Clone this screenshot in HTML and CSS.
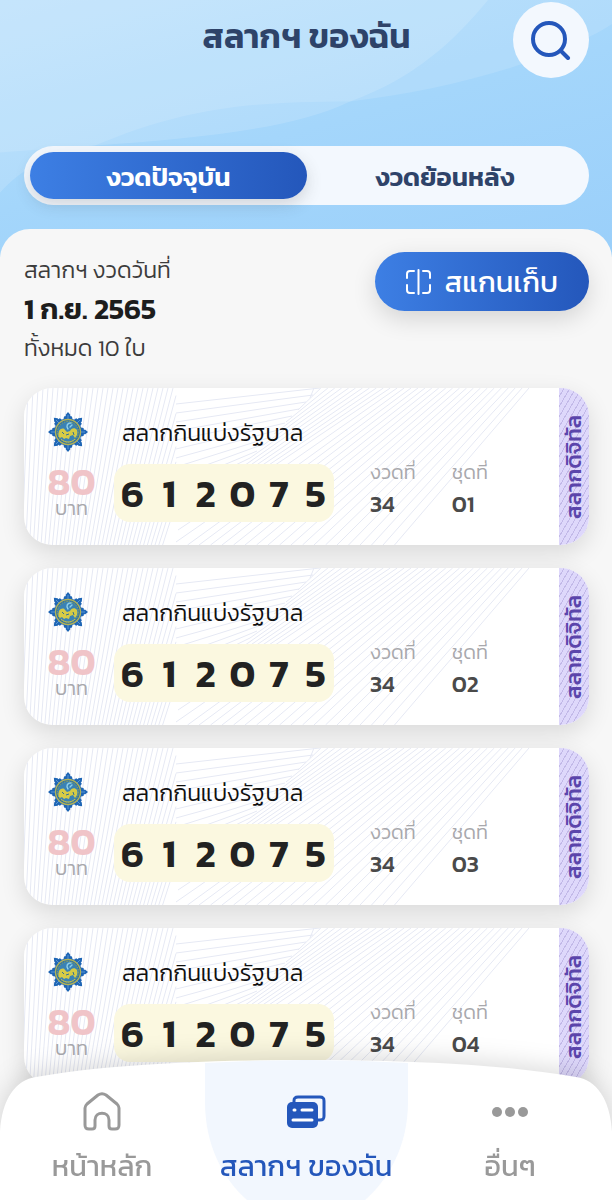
FILE: index.html
```html
<!DOCTYPE html>
<html lang="th">
<head>
<meta charset="utf-8">
<meta name="viewport" content="width=device-width, initial-scale=1">
<title>สลากฯ ของฉัน</title>
<link rel="stylesheet" href="styles.css">
</head>
<body>
<svg class="defs" aria-hidden="true">
  <symbol id="emblem" viewBox="0 0 40 40">
    <g fill="#1f66b5">
      <path id="petal" d="M20 0l2.500 3-.5 1 2 .5 .5 2.500 1.500 1-6 6-6-6 1.500-1 .5-2.500 2-.5-.5-1z"/>
      <use href="#petal" transform="rotate(45 20 20)"/><use href="#petal" transform="rotate(90 20 20)"/><use href="#petal" transform="rotate(135 20 20)"/>
      <use href="#petal" transform="rotate(180 20 20)"/><use href="#petal" transform="rotate(225 20 20)"/><use href="#petal" transform="rotate(270 20 20)"/><use href="#petal" transform="rotate(315 20 20)"/>
    </g>
    <path fill="none" stroke="#72a9dc" stroke-width=".7" d="M20 3v4M20 33v4M3 20h4M33 20h4M8 8l3 3M29 29l3 3M32 8l-3 3M8 32l3-3"/>
    <circle cx="20" cy="20" r="12.500" fill="#2a6ea8" stroke="#b0b258" stroke-width="1.400"/>
    <circle cx="20" cy="20" r="10.500" fill="#3a82b4" stroke="#9aa552" stroke-width="1" stroke-dasharray="1.500 1"/>
    <path fill="#d6cb45" d="M11 19c2-3 5-3 6-1l2 2 3-1c1-3 5-4 7-1 1 3 0 6-2 8l-2-3-3 1-1 3-3-1-2 1-2-2-2 1c-2-1-2-4-1-7z"/>
    <path fill="none" stroke="#8fd0ea" stroke-width="1.400" stroke-linecap="round" d="M23 11c-4 0-5 3-3 6M24 13l-2 2"/>
    <path fill="none" stroke="#2f6f9a" stroke-width="1" d="M14 20l2 2M18 23l3-1M25 20l1 3"/>
    <path fill="none" stroke="#c4bf4b" stroke-width="1" d="M13 27c4 4 10 4 14 0"/>
  </symbol>
  <symbol id="guilloche" viewBox="0 0 565 157">
    <path id="guilloche-lines" fill="none" stroke="#e6e9f4" stroke-width="1"/>
  </symbol>
</svg>

<header class="top">
  <svg class="waves" viewBox="0 0 612 256" preserveAspectRatio="none" aria-hidden="true">
    <path fill="#fff" fill-opacity=".14" d="M0 0H488C455 40 415 78 350 101C290 130 190 138 95 145C50 150 20 170 0 192z"/>
    <path fill="#fff" fill-opacity=".12" d="M0 0H612V24C560 58 450 90 350 101C240 101 180 110 95 145L0 152z"/>
  </svg>
  <div class="title-row">
    <h1>สลากฯ ของฉัน</h1>
    <button class="search" type="button" aria-label="ค้นหา">
      <svg viewBox="0 0 40 40" width="40" height="40" fill="none" stroke="#2457bb" stroke-width="4" stroke-linecap="round"><circle cx="18" cy="19" r="16"/><path d="M30 31l7 7"/></svg>
    </button>
  </div>
  <div class="tabs" role="tablist">
    <button class="tab selected" type="button" role="tab" aria-selected="true">งวดปัจจุบัน</button>
    <button class="tab" type="button" role="tab" aria-selected="false">งวดย้อนหลัง</button>
  </div>
</header>

<main class="sheet">
  <section class="summary">
    <div>
      <p>สลากฯ งวดวันที่</p>
      <h2>1 ก.ย. 2565</h2>
      <p>ทั้งหมด 10 ใบ</p>
    </div>
    <button class="scan" type="button">
      <svg viewBox="0 0 25 26" width="25" height="26" fill="none" stroke="#fff" stroke-width="2" stroke-linecap="round" aria-hidden="true"><path d="M12.500 1v24M8 2H4a3 3 0 0 0-3 3v4M1 16v5a3 3 0 0 0 3 3h4M17 2h4a3 3 0 0 1 3 3v4M24 16v5a3 3 0 0 1-3 3h-4"/></svg>
      <span>สแกนเก็บ</span>
    </button>
  </section>

  <div class="tickets">
    <article class="ticket">
      <svg class="paper" preserveAspectRatio="none" viewBox="0 0 565 157" aria-hidden="true"><use href="#guilloche"/></svg>
      <div class="price"><svg class="emblem" aria-hidden="true"><use href="#emblem"/></svg><strong>80</strong><span>บาท</span></div>
      <div class="number"><h3>สลากกินแบ่งรัฐบาล</h3><p class="digits"><span>6</span><span>1</span><span>2</span><span>0</span><span>7</span><span>5</span></p></div>
      <dl><div><dt>งวดที่</dt><dd>34</dd></div><div><dt>ชุดที่</dt><dd>01</dd></div></dl>
      <div class="kind"><span>สลากดิจิทัล</span></div>
    </article>
    <article class="ticket">
      <svg class="paper" preserveAspectRatio="none" viewBox="0 0 565 157" aria-hidden="true"><use href="#guilloche"/></svg>
      <div class="price"><svg class="emblem" aria-hidden="true"><use href="#emblem"/></svg><strong>80</strong><span>บาท</span></div>
      <div class="number"><h3>สลากกินแบ่งรัฐบาล</h3><p class="digits"><span>6</span><span>1</span><span>2</span><span>0</span><span>7</span><span>5</span></p></div>
      <dl><div><dt>งวดที่</dt><dd>34</dd></div><div><dt>ชุดที่</dt><dd>02</dd></div></dl>
      <div class="kind"><span>สลากดิจิทัล</span></div>
    </article>
    <article class="ticket">
      <svg class="paper" preserveAspectRatio="none" viewBox="0 0 565 157" aria-hidden="true"><use href="#guilloche"/></svg>
      <div class="price"><svg class="emblem" aria-hidden="true"><use href="#emblem"/></svg><strong>80</strong><span>บาท</span></div>
      <div class="number"><h3>สลากกินแบ่งรัฐบาล</h3><p class="digits"><span>6</span><span>1</span><span>2</span><span>0</span><span>7</span><span>5</span></p></div>
      <dl><div><dt>งวดที่</dt><dd>34</dd></div><div><dt>ชุดที่</dt><dd>03</dd></div></dl>
      <div class="kind"><span>สลากดิจิทัล</span></div>
    </article>
    <article class="ticket">
      <svg class="paper" preserveAspectRatio="none" viewBox="0 0 565 157" aria-hidden="true"><use href="#guilloche"/></svg>
      <div class="price"><svg class="emblem" aria-hidden="true"><use href="#emblem"/></svg><strong>80</strong><span>บาท</span></div>
      <div class="number"><h3>สลากกินแบ่งรัฐบาล</h3><p class="digits"><span>6</span><span>1</span><span>2</span><span>0</span><span>7</span><span>5</span></p></div>
      <dl><div><dt>งวดที่</dt><dd>34</dd></div><div><dt>ชุดที่</dt><dd>04</dd></div></dl>
      <div class="kind"><span>สลากดิจิทัล</span></div>
    </article>
  </div>
</main>

<nav class="bar">
  <svg class="bar-shape" viewBox="0 0 612 140" preserveAspectRatio="none" aria-hidden="true">
    <path fill="#fff" d="M0 72C2 38 16 20 36 17C110 4 210 0 306 0S502 4 576 17C596 20 610 38 612 72V140H0z"/>
    <path fill="#f2f7fe" d="M205 3Q306-3 408 3V42C408 84 390 118 365 140H247C222 118 205 84 205 42z"/>
  </svg>
  <a href="#home">
    <svg viewBox="0 0 40 40" width="40" height="40" fill="none" stroke="#999" stroke-width="3" stroke-linejoin="round" aria-hidden="true"><path d="M3 16c0-2 1-3 2-4L16 3c3-2 5-2 8 0l11 9c1 1 2 2 2 4v17c0 3-1 4-4 4h-3c-2 0-3-1-3-3V28c0-9-14-9-14 0v6c0 2-1 3-3 3H7c-3 0-4-1-4-4z"/></svg>
    <span>หน้าหลัก</span>
  </a>
  <a href="#tickets" class="current" aria-current="page">
    <svg viewBox="0 0 40 40" width="40" height="40" fill="none" aria-hidden="true"><path stroke="#2457bb" stroke-width="3" d="M8 12V9c0-3 1-4 4-4h22c3 0 4 1 4 4v15c0 3-1 4-4 4h-3"/><rect x="1" y="10" width="31" height="26" rx="5" fill="#2457bb"/><path stroke="#fff" stroke-width="3" stroke-linecap="round" d="M8 18h1M16 18h10M7 28h19"/></svg>
    <span>สลากฯ ของฉัน</span>
  </a>
  <a href="#more">
    <svg viewBox="0 0 40 40" width="40" height="40" fill="#999" aria-hidden="true"><circle cx="7" cy="20" r="5"/><circle cx="20" cy="20" r="5"/><circle cx="33" cy="20" r="5"/></svg>
    <span>อื่นๆ</span>
  </a>
</nav>
<script src="guilloche.js"></script>
</body>
</html>
```
FILE: guilloche.js
```js
// Fine security lines printed on every ticket.
const lines = [];
const line = (x1, y1, x2, y2) =>
  lines.push(`M${x1.toFixed(1)} ${y1.toFixed(1)}L${x2.toFixed(1)} ${y2.toFixed(1)}`);

// Steep lines on the left that lean further with each step.
for (let i = 0; i < 38; i++) {
  const top = 4 + i * 5;
  const bottom = top - 6 - i * 1.2;
  if (top <= 152) {
    line(bottom, 157, top, 0);
  } else {
    line(bottom, 157, 152, ((top - 152) / (top - bottom)) * 157);
  }
}

// Shallow lines that meet the ridge.
for (let i = 0; i < 11; i++) {
  line(152, 16 + i * 9, 296 - i * 7, i * 7);
}

// Diagonals to the right of the ridge.
for (let i = 0; i < 32; i++) {
  const top = 290 + (215 * i) / 31;
  const y = 10 + i * 12;
  if (y < 157) {
    line(Math.max(152, 296 - y), y, top, 0);
  } else {
    line(152 + (i - 12) * 11.5, 157, top, 0);
  }
}

document.getElementById("guilloche-lines").setAttribute("d", lines.join(""));
```
FILE: styles.css
```css
* { box-sizing: border-box; }
body, h1, h2, h3, p, dl, dd { margin: 0; }

body {
  min-height: 100vh;
  display: flex;
  flex-direction: column;
  background: #f7f7f7;
  color: #222;
  font-family: Kanit, Prompt, "Noto Sans Thai", "Noto Sans", sans-serif;
  overflow: hidden;
}

button { border: 0; font: inherit; cursor: pointer; }
.defs { position: absolute; width: 0; height: 0; }

.top {
  position: relative;
  padding: 2px 23px 52px 24px;
  background: linear-gradient(165deg, #b4defc 0%, #a4d6fb 50%, #9acffa 100%);
}
.waves { position: absolute; inset: 0; width: 100%; height: 100%; }

.title-row {
  position: relative;
  display: grid;
  grid-template-columns: 76px 1fr 76px;
  height: 76px;
  margin-bottom: 68px;
}
h1 {
  grid-column: 2;
  padding-top: 8px;
  text-align: center;
  font-size: 34px;
  line-height: 52px;
  font-weight: 600;
  color: #2e4369;
}
.search {
  width: 76px;
  height: 76px;
  padding: 0;
  border-radius: 50%;
  background: #f3f8fe;
  display: grid;
  place-items: center;
}

.tabs {
  position: relative;
  display: flex;
  height: 59px;
  padding: 6px;
  border-radius: 30px;
  background: #f3f8fe;
}
.tab {
  flex: 1;
  padding: 2px 0 0;
  border-radius: 24px;
  background: none;
  font-size: 26px;
  line-height: 36px;
  font-weight: 600;
  color: #2e4369;
}
.tab.selected {
  color: #fff;
  background: linear-gradient(90deg, #3d7fe4, #2457bb);
  box-shadow: 0 6px 16px rgba(60, 60, 60, .18);
}

.sheet {
  position: relative;
  flex: 1;
  margin-top: -28px;
  padding: 23px 23px 0 24px;
  border-radius: 30px 30px 0 0;
  background: #f7f7f7;
}
.summary {
  display: flex;
  justify-content: space-between;
  align-items: flex-start;
  margin-bottom: 22px;
}
.summary p { font-size: 23px; line-height: 36px; font-weight: 300; color: #3c3c3c; }
.summary h2 { font-size: 29px; line-height: 42px; font-weight: 600; color: #1d1d1d; }
.scan {
  display: flex;
  align-items: center;
  gap: 14px;
  height: 59px;
  padding: 0 31px;
  border-radius: 30px;
  background: linear-gradient(90deg, #3d7fe4, #2457bb);
  box-shadow: 0 8px 24px rgba(0, 0, 0, .14);
  font-size: 29px;
  color: #fff;
}

.tickets { display: flex; flex-direction: column; gap: 23px; }
.ticket {
  position: relative;
  display: flex;
  height: 157px;
  padding-left: 20px;
  border-radius: 28px;
  overflow: hidden;
  background: #fff;
  box-shadow: 0 8px 24px rgba(0, 0, 0, .12);
}
.paper { position: absolute; inset: 0; width: 100%; height: 100%; }
.price {
  position: relative;
  width: 55px;
  padding-top: 24px;
  display: flex;
  flex-direction: column;
  align-items: center;
}
.emblem { width: 40px; height: 40px; margin-right: 8px; }
.price strong { margin-top: 12px; font-size: 38px; line-height: 36px; font-weight: 600; color: #f0c4c8; }
.price span { font-size: 20px; line-height: 16px; font-weight: 300; color: #a8a8ac; }

.number { position: relative; width: 220px; margin-left: 15px; padding-top: 25px; }
h3 { padding-left: 8px; font-size: 23px; line-height: 40px; font-weight: 300; color: #111; }
.digits {
  display: flex;
  height: 58px;
  margin-top: 11px;
  border-radius: 16px;
  background: #fbf8e0;
  font-size: 39px;
  line-height: 58px;
  font-weight: 600;
}
.digits span { flex: 1; text-align: center; }

dl { position: relative; flex: 1; display: flex; gap: 36px; padding: 68px 0 0 36px; }
dt { font-size: 20px; line-height: 32px; font-weight: 300; color: #a8a8ac; }
dd { font-size: 23px; line-height: 32px; font-weight: 500; color: #4a4a4a; }

.kind {
  position: relative;
  width: 30px;
  display: grid;
  place-items: center;
  background: repeating-linear-gradient(120deg, #ded8fb 0 4px, #c2b9e8 4px 5px);
  color: #5b45ab;
}
.kind span { writing-mode: vertical-rl; transform: rotate(180deg); font-size: 22px; line-height: 30px; font-weight: 500; }

.bar {
  position: fixed;
  left: 0;
  right: 0;
  bottom: 0;
  height: 140px;
  display: grid;
  grid-template-columns: repeat(3, 1fr);
}
.bar-shape {
  position: absolute;
  inset: 0;
  width: 100%;
  height: 100%;
  filter: drop-shadow(0 -4px 12px rgba(0, 0, 0, .14));
}
.bar a {
  position: relative;
  display: flex;
  flex-direction: column;
  align-items: center;
  gap: 12px;
  padding-top: 32px;
  font-size: 29px;
  line-height: 44px;
  color: #999;
  text-decoration: none;
}
.bar a.current { color: #2457bb; }
```
